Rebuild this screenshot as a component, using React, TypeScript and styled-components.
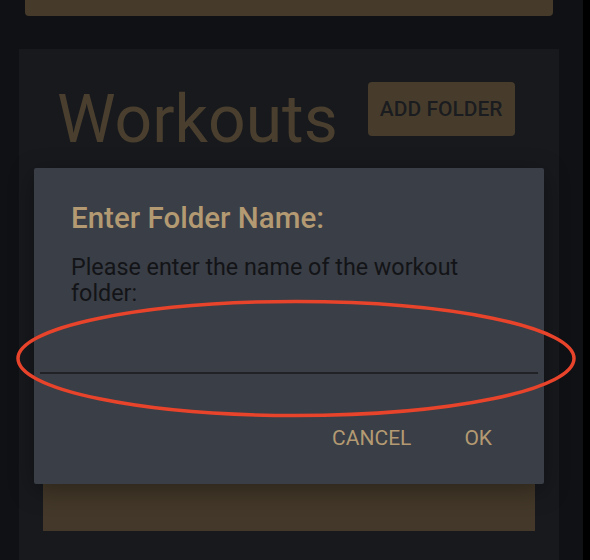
import React from "react";
import styled, { createGlobalStyle } from "styled-components";

const GlobalStyle = createGlobalStyle`
  html, body {
    margin: 0;
    padding: 0;
    background: #000000;
    font-family: Roboto, "Liberation Sans", sans-serif;
  }
  * { box-sizing: border-box; }
`;

const Screen = styled.div`
  position: relative;
  width: 583px;
  height: 560px;
  background: #0f1115;
  display: flex;
  flex-direction: column;
  overflow: hidden;
`;

const TopCard = styled.div`
  margin-left: 25px;
  width: 528px;
  height: 16px;
  background: #463b2b;
  border-radius: 0 0 4px 4px;
  flex-shrink: 0;
`;

const Panel = styled.section`
  margin: 33px 0 0 19px;
  width: 540px;
  flex: 1;
  background: #17191d;
  display: flex;
  flex-direction: column;
`;

const Header = styled.header`
  display: flex;
  align-items: flex-start;
  gap: 30px;
  padding: 31px 0 0 38px;
`;

const Title = styled.h1`
  margin: 0;
  font-family: Roboto, "Liberation Sans", sans-serif;
  font-weight: 400;
  font-size: 66px;
  line-height: 80px;
  color: #4a3f2e;
`;

const AddButton = styled.button`
  margin-top: 2px;
  width: 147px;
  height: 54px;
  border: none;
  border-radius: 4px;
  background: #473c2c;
  color: #1b1c1f;
  font-family: Roboto, "Liberation Sans", sans-serif;
  font-weight: 500;
  font-size: 21px;
  padding: 0;
  display: flex;
  align-items: center;
  justify-content: center;
`;

const FolderList = styled.div`
  padding: 20px 24px 0 24px;
`;

const FolderCard = styled.div`
  height: 351px;
  background: #433829;
`;

const Dialog = styled.div`
  position: absolute;
  left: 34px;
  top: 168px;
  width: 510px;
  height: 316px;
  background: #3a3e46;
  border-radius: 2px;
  padding: 34px 6px 0 6px;
  display: flex;
  flex-direction: column;
  box-shadow: 0 6px 24px rgba(0, 0, 0, 0.35);
`;

const DialogTitle = styled.h2`
  margin: 0;
  padding-left: 31px;
  font-family: Roboto, "Liberation Sans", sans-serif;
  font-weight: 500;
  font-size: 29.5px;
  line-height: 32px;
  color: #b39a72;
`;

const Message = styled.p`
  margin: 20px 0 0 0;
  padding: 0 31px;
  font-family: Roboto, "Liberation Sans", sans-serif;
  font-weight: 400;
  font-size: 23.3px;
  line-height: 26px;
  color: #131417;
`;

const NameInput = styled.input`
  display: block;
  margin-top: 44px;
  width: 100%;
  height: 24px;
  border: none;
  border-bottom: 2px solid #202226;
  background: transparent;
  outline: none;
  padding: 0;
  font-family: Roboto, "Liberation Sans", sans-serif;
  font-size: 22px;
  color: #141518;
`;

const Actions = styled.div`
  display: flex;
  justify-content: flex-end;
  gap: 21px;
  margin-top: 46px;
  padding-right: 30px;
`;

const TextButton = styled.button`
  border: none;
  background: transparent;
  padding: 0 16px;
  font-family: Roboto, "Liberation Sans", sans-serif;
  font-weight: 400;
  font-size: 21px;
  line-height: 36px;
  color: #b39a72;
`;

const Annotation = styled.svg`
  position: absolute;
  left: 0;
  top: 0;
  pointer-events: none;
`;

export default function App() {
  return (
    <>
      <GlobalStyle />
      <Screen>
        <TopCard />
        <Panel>
          <Header>
            <Title>Workouts</Title>
            <AddButton>ADD FOLDER</AddButton>
          </Header>
          <FolderList>
            <FolderCard />
          </FolderList>
        </Panel>
        <Dialog>
          <DialogTitle>Enter Folder Name:</DialogTitle>
          <Message>Please enter the name of the workout folder:</Message>
          <NameInput type="text" />
          <Actions>
            <TextButton>CANCEL</TextButton>
            <TextButton>OK</TextButton>
          </Actions>
        </Dialog>
        <Annotation width={590} height={560} viewBox="0 0 590 560">
          <ellipse
            cx={296}
            cy={358.5}
            rx={278}
            ry={57}
            fill="none"
            stroke="#e8432b"
            strokeWidth={3.5}
          />
        </Annotation>
      </Screen>
    </>
  );
}
